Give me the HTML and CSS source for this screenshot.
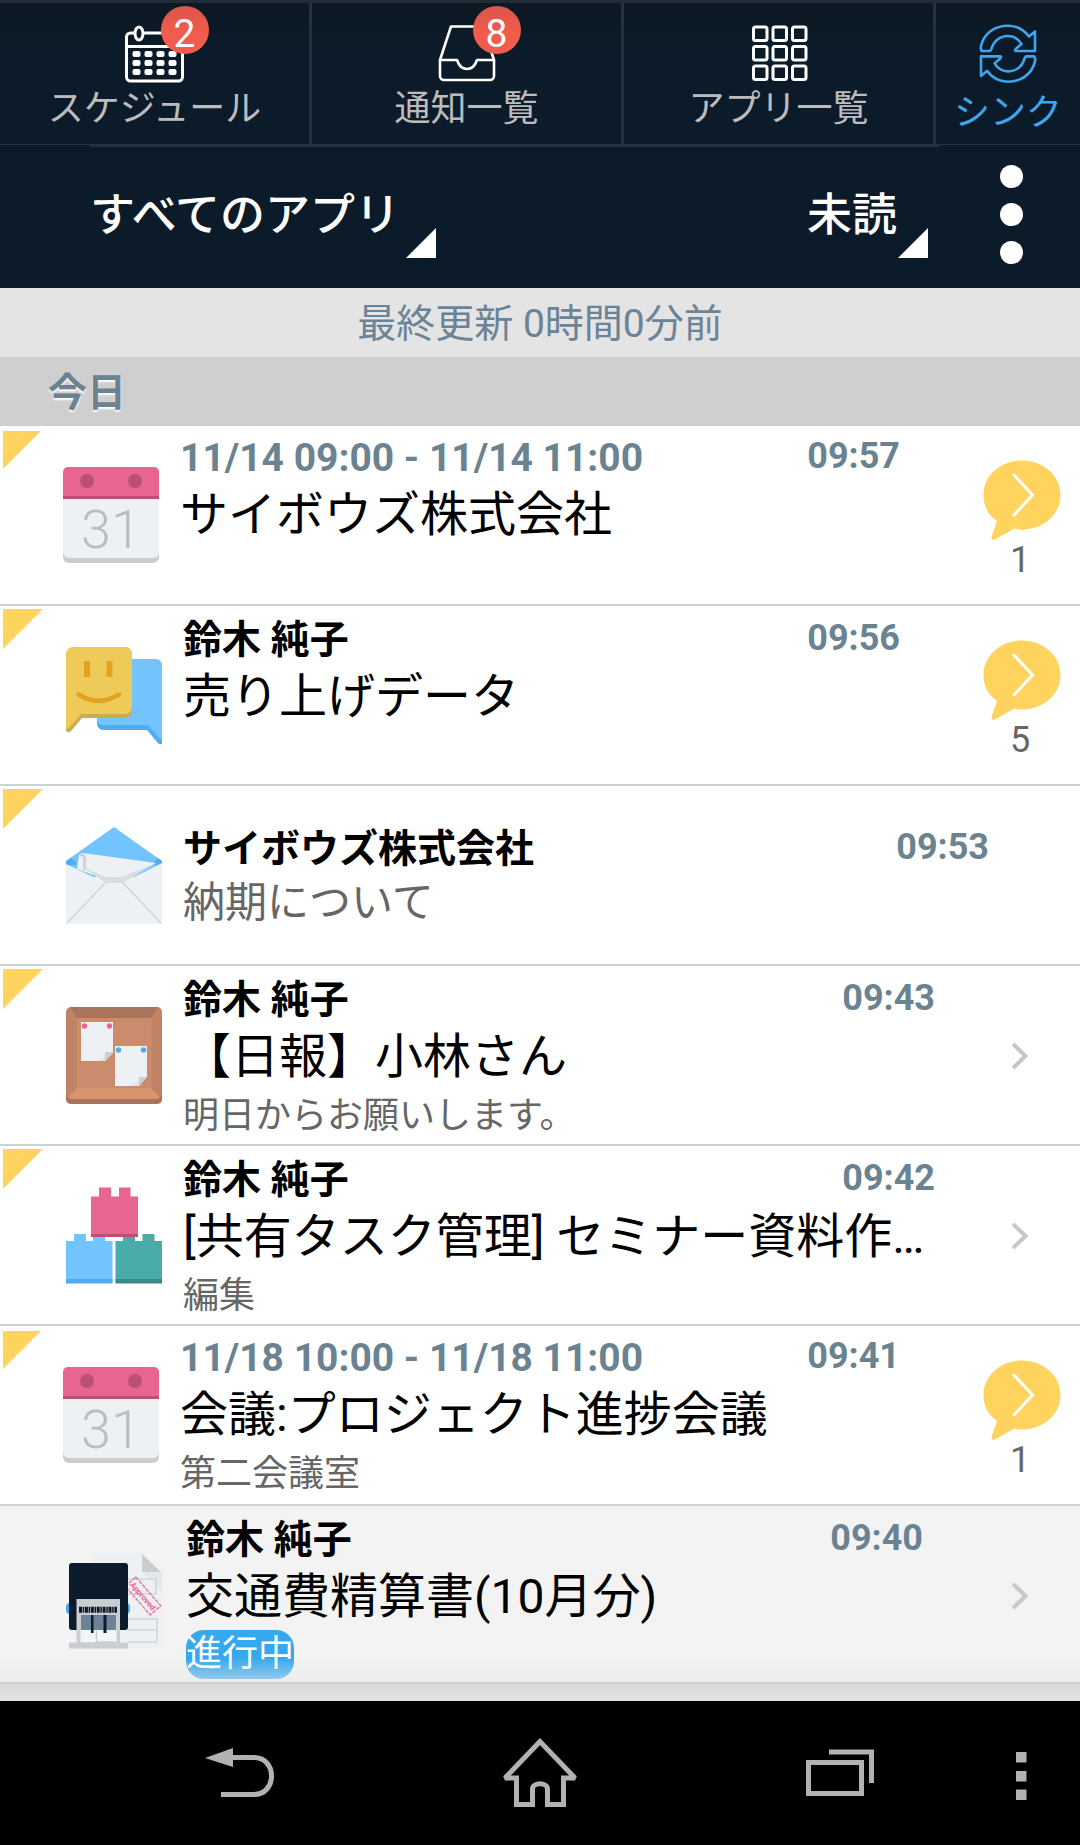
FILE: index.html
```
<!DOCTYPE html>
<html lang="ja">
<head>
    <meta charset="UTF-8">
    <meta name="viewport" content="width=device-width, initial-scale=1.0">
    <title>通知一覧</title>
    <link rel="stylesheet" href="styles.css">
</head>
<body>
    <nav class="tabs">
        <a class="tab" href="#schedule">
            <span class="tab-icon">
                <svg viewBox="0 0 60 60" fill="none" stroke="#fff" stroke-width="3">
                    <rect x="1.5" y="9" width="56" height="48" rx="4"/>
                    <path d="M1.5 22.5H57.5"/>
                    <ellipse cx="14" cy="9.5" rx="4" ry="6.5" fill="#0c1b29"/>
                    <g fill="#fff" stroke="none">
                        <rect x="7.5" y="27" width="8" height="6" rx="2"/><rect x="19.5" y="27" width="8" height="6" rx="2"/><rect x="31.5" y="27" width="8" height="6" rx="2"/><rect x="43.5" y="27" width="8" height="6" rx="2"/>
                        <rect x="7.5" y="36" width="8" height="6" rx="2"/><rect x="19.5" y="36" width="8" height="6" rx="2"/><rect x="31.5" y="36" width="8" height="6" rx="2"/><rect x="43.5" y="36" width="8" height="6" rx="2"/>
                        <rect x="7.5" y="45" width="8" height="6" rx="2"/><rect x="19.5" y="45" width="8" height="6" rx="2"/><rect x="31.5" y="45" width="8" height="6" rx="2"/><rect x="43.5" y="45" width="8" height="6" rx="2"/>
                    </g>
                </svg>
                <span class="badge">2</span>
            </span>
            <span class="tab-label">スケジュール</span>
        </a>
        <a class="tab" href="#notice">
            <span class="tab-icon">
                <svg viewBox="0 0 60 60" fill="none" stroke="#fff" stroke-width="2.6" stroke-linejoin="round">
                    <path d="M3 36L14 2.5H46L57 36V52a4 4 0 0 1-4 4H7a4 4 0 0 1-4-4Z"/>
                    <path d="M3 36H20C22 42 25 45 30 45S38 42 40 36H57"/>
                </svg>
                <span class="badge">8</span>
            </span>
            <span class="tab-label">通知一覧</span>
        </a>
        <a class="tab" href="#apps">
            <span class="tab-icon">
                <svg viewBox="0 0 60 60" fill="none" stroke="#fff" stroke-width="3">
                    <rect x="4.5" y="3" width="13.5" height="13.5" rx="2"/><rect x="24" y="3" width="13.5" height="13.5" rx="2"/><rect x="43.5" y="3" width="13.5" height="13.5" rx="2"/>
                    <rect x="4.5" y="22.5" width="13.5" height="13.5" rx="2"/><rect x="24" y="22.5" width="13.5" height="13.5" rx="2"/><rect x="43.5" y="22.5" width="13.5" height="13.5" rx="2"/>
                    <rect x="4.5" y="42" width="13.5" height="13.5" rx="2"/><rect x="24" y="42" width="13.5" height="13.5" rx="2"/><rect x="43.5" y="42" width="13.5" height="13.5" rx="2"/>
                </svg>
            </span>
            <span class="tab-label">アプリ一覧</span>
        </a>
        <button class="tab sync" type="button">
            <span class="tab-icon">
                <svg viewBox="0 0 60 60" fill="none" stroke="#40a5ec" stroke-width="2.6" stroke-linejoin="round">
                    <path id="sync-arrow" d="M4 27C2 26 3 24 3 22C6 9 17 1.7 30 1.7C38 1.7 46 6 51 12.5L57 7.5V27H37.5C36 26 38 24.5 43.5 20C40 14.5 35 12 30 12C22 12 15.500 17 13.500 25L12 27Z"/>
                    <use href="#sync-arrow" transform="rotate(180 30 29.7)"/>
                </svg>
            </span>
            <span class="tab-label">シンク</span>
        </button>
    </nav>

    <header class="filter">
        <div class="filter-row">
            <div class="picker">
                <select aria-label="アプリ"><option>すべてのアプリ</option></select>
            </div>
            <div class="picker picker-right">
                <select aria-label="表示"><option>未読</option></select>
            </div>
            <button class="more" type="button" aria-label="メニュー">
                <i></i><i></i><i></i>
            </button>
        </div>
    </header>

    <main>
        <p class="updated">最終更新 0時間0分前</p>
        <h2 class="day">今日</h2>

        <ul class="list">
            <li>
                <a class="item unread schedule" href="#1">
                    <svg class="icon" viewBox="0 0 96 102">
                        <rect y="40" width="96" height="56" rx="6" fill="#c9ced3"/>
                        <path d="M0 28H96V85a6 6 0 0 1-6 6H6a6 6 0 0 1-6-6Z" fill="#edf1f3"/>
                        <path d="M0 32V5a5 5 0 0 1 5-5H91a5 5 0 0 1 5 5V32Z" fill="#e86591"/>
                        <path d="M0 29H96V32H0Z" fill="#ba5175"/>
                        <circle cx="24" cy="14" r="7" fill="#ba5175"/><circle cx="72" cy="14" r="7" fill="#ba5175"/>
                        <text class="icon-day" x="48" y="81">31</text>
                    </svg>
                    <div class="body">
                        <div class="head"><span class="date">11/14 09:00 - 11/14 11:00</span><time>09:57</time></div>
                        <div class="title">サイボウズ株式会社</div>
                    </div>
                    <div class="action">
                        <svg class="bubble" viewBox="0 0 78 80">
                            <path d="M39-.5C61-.5 77.500 15 77.500 34S61 68.500 39 68.500Q35 68.500 31.500 67.500L11 79Q8 79 8.500 76L14 60C5 54 .5 45 .5 34C.5 15 17-.5 39-.5Z" fill="#ffd45e"/>
                            <path d="M31 14L49.500 34L31 54" fill="none" stroke="#fff" stroke-width="3" stroke-linecap="round" stroke-linejoin="round"/>
                        </svg>
                        <span class="count">1</span>
                    </div>
                </a>
            </li>
            <li>
                <a class="item unread talk" href="#2">
                    <svg class="icon" viewBox="0 0 96 102">
                        <path d="M37 13H90a6 6 0 0 1 6 6V97Q93 98 91 95L81 83H37a6 6 0 0 1-6-6V19Z" fill="#50acf0"/>
                        <path d="M37 12H90a6 6 0 0 1 6 6V92Q95 93 93 91L82 78H37a6 6 0 0 1-6-6V18Z" fill="#73c3ff"/>
                        <path d="M7 0H59a7 7 0 0 1 7 7V64a7 7 0 0 1-7 7H16L5 84Q1 87 0 83V7Z" fill="#cdac4c"/>
                        <path d="M7 0H59a7 7 0 0 1 7 7V60a7 7 0 0 1-7 7H15L3 81Q0 83 0 80V7a7 7 0 0 1 7-7Z" fill="#eecb59"/>
                        <path d="M18 14H24V30H18ZM40.500 14H46.500V30H40.500Z" fill="#e2a320"/>
                        <path d="M12.500 47.500Q32 60 53 47.500" fill="none" stroke="#e2a320" stroke-width="4.500" stroke-linecap="round"/>
                    </svg>
                    <div class="body">
                        <div class="head"><span class="name">鈴木 純子</span><time>09:56</time></div>
                        <div class="title">売り上げデータ</div>
                    </div>
                    <div class="action">
                        <svg class="bubble" viewBox="0 0 78 80">
                            <path d="M39-.5C61-.5 77.500 15 77.500 34S61 68.500 39 68.500Q35 68.500 31.500 67.500L11 79Q8 79 8.500 76L14 60C5 54 .5 45 .5 34C.5 15 17-.5 39-.5Z" fill="#ffd45e"/>
                            <path d="M31 14L49.500 34L31 54" fill="none" stroke="#fff" stroke-width="3" stroke-linecap="round" stroke-linejoin="round"/>
                        </svg>
                        <span class="count">5</span>
                    </div>
                </a>
            </li>
            <li>
                <a class="item unread mail" href="#3">
                    <svg class="icon" viewBox="0 0 96 102">
                        <path d="M0 34L48 0L96 34V50H0Z" fill="#73c3ff"/>
                        <path d="M0 34V38H10V35L5 31ZM96 34V38H88V35L92 31Z" fill="#50acf0"/>
                        <path d="M11 42L13 28Q14 26 17 26L90 36L60 52H38Z" fill="#edf1f3"/>
                        <path d="M0 37L39 55.500H57L96 36V97H0Z" fill="#edf1f3"/>
                        <path d="M14 28Q18 27 18.500 31V43" fill="none" stroke="#c9ced3" stroke-width="2.500"/>
                        <path d="M17 40L40 50H56L90 36L57 56H39Z" fill="#d9dde1"/>
                        <path d="M39 56L1 96M57 56L95 96" stroke="#d0d5d8" stroke-width="1.500"/>
                    </svg>
                    <div class="body">
                        <div class="head"><span class="name">サイボウズ株式会社</span><time>09:53</time></div>
                        <div class="subject">納期について</div>
                    </div>
                </a>
            </li>
            <li>
                <a class="item unread" href="#4">
                    <svg class="icon" viewBox="0 0 96 102">
                        <rect width="96" height="97" rx="5" fill="#c08465"/>
                        <path d="M4 0H92L85 11H11Z" fill="#a8745b"/>
                        <path d="M0 89L4 92H92L96 89V92a5 5 0 0 1-5 5H5a5 5 0 0 1-5-5Z" fill="#a8745b"/>
                        <path d="M11 81H85L94 90L91 92H5L2 90Z" fill="#d6946f"/>
                        <rect x="11" y="11" width="74.500" height="70" fill="#ca8c6c"/>
                        <path d="M15 15H47V46L39 54H15ZM49 39H81V70L73 79H49Z" fill="#edf1f3"/>
                        <path d="M47 45L30 54H39ZM81 69L64 79H73Z" fill="#e2e5e7"/>
                        <path d="M39 45H47L39 54ZM73 70H81L73 79Z" fill="#c9ced3"/>
                        <circle cx="18.500" cy="19" r="2.700" fill="#e86591"/><circle cx="43.500" cy="19" r="2.700" fill="#e86591"/>
                        <circle cx="52.500" cy="43" r="2.700" fill="#50acf0"/><circle cx="77.500" cy="43" r="2.700" fill="#50acf0"/>
                    </svg>
                    <div class="body">
                        <div class="head"><span class="name">鈴木 純子</span><time>09:43</time></div>
                        <div class="title">【日報】小林さん</div>
                        <div class="note">明日からお願いします。</div>
                    </div>
                    <div class="action">
                        <svg class="chevron" viewBox="0 0 18 28"><path d="M2 2L14.500 14L2 26" fill="none" stroke="#c7c7cc" stroke-width="4"/></svg>
                    </div>
                </a>
            </li>
            <li>
                <a class="item unread" href="#5">
                    <svg class="icon" viewBox="0 0 96 102">
                        <path d="M0 54H8V47H20V54H27V47H39V54H46.500V96H0Z" fill="#73c3ff"/>
                        <path d="M0 92H46.500V96.500H0Z" fill="#50acf0"/>
                        <path d="M49.500 54H57V47H69V54H76.500V47H88.500V54H96V96H49.500Z" fill="#4aaca8"/>
                        <path d="M49.500 92H96V96.500H49.500Z" fill="#3c8a87"/>
                        <path d="M25 9.500H33V.5H45V9.500H53V.5H64.500V9.500H72V50H25Z" fill="#e86591"/>
                        <path d="M25 47H72V50H25Z" fill="#ba5175"/>
                    </svg>
                    <div class="body">
                        <div class="head"><span class="name">鈴木 純子</span><time>09:42</time></div>
                        <div class="title">[共有タスク管理] セミナー資料作…</div>
                        <div class="note">編集</div>
                    </div>
                    <div class="action">
                        <svg class="chevron" viewBox="0 0 18 28"><path d="M2 2L14.500 14L2 26" fill="none" stroke="#c7c7cc" stroke-width="4"/></svg>
                    </div>
                </a>
            </li>
            <li>
                <a class="item unread schedule" href="#6">
                    <svg class="icon" viewBox="0 0 96 102">
                        <rect y="40" width="96" height="56" rx="6" fill="#c9ced3"/>
                        <path d="M0 28H96V85a6 6 0 0 1-6 6H6a6 6 0 0 1-6-6Z" fill="#edf1f3"/>
                        <path d="M0 32V5a5 5 0 0 1 5-5H91a5 5 0 0 1 5 5V32Z" fill="#e86591"/>
                        <path d="M0 29H96V32H0Z" fill="#ba5175"/>
                        <circle cx="24" cy="14" r="7" fill="#ba5175"/><circle cx="72" cy="14" r="7" fill="#ba5175"/>
                        <text class="icon-day" x="48" y="81">31</text>
                    </svg>
                    <div class="body">
                        <div class="head"><span class="date">11/18 10:00 - 11/18 11:00</span><time>09:41</time></div>
                        <div class="title">会議:プロジェクト進捗会議</div>
                        <div class="note">第二会議室</div>
                    </div>
                    <div class="action">
                        <svg class="bubble" viewBox="0 0 78 80">
                            <path d="M39-.5C61-.5 77.500 15 77.500 34S61 68.500 39 68.500Q35 68.500 31.500 67.500L11 79Q8 79 8.500 76L14 60C5 54 .5 45 .5 34C.5 15 17-.5 39-.5Z" fill="#ffd45e"/>
                            <path d="M31 14L49.500 34L31 54" fill="none" stroke="#fff" stroke-width="3" stroke-linecap="round" stroke-linejoin="round"/>
                        </svg>
                        <span class="count">1</span>
                    </div>
                </a>
            </li>
            <li>
                <a class="item workflow" href="#7">
                    <svg class="icon" viewBox="0 0 96 102">
                        <path d="M26 6H77L96 25V101H26Z" fill="#edf1f3"/>
                        <path d="M76 7L95 25H76Z" fill="#c9ced3"/>
                        <path d="M77 25H96V44Z" fill="#e4e8ea"/>
                        <path d="M62 32H90V47H62M62 72H91V95H62M62 83H91" fill="none" stroke="#d0d5d8" stroke-width="1.500"/>
                        <g transform="translate(77 49) rotate(49)">
                            <rect x="-19" y="-7" width="38" height="14" fill="none" stroke="#ee7ba0" stroke-width="1.500" stroke-dasharray="4 1"/>
                            <text class="icon-stamp" x="0" y="3">Approved</text>
                        </g>
                        <rect x="0" y="56" width="64" height="11" rx="4" fill="#45a9f0"/>
                        <rect x="3" y="16" width="59" height="67" rx="3" fill="#0c1b29"/>
                        <path d="M10.500 52H54V97H10.500Z" fill="#c9ced3"/>
                        <path d="M14.500 83H50.500V95.500H14.500Z" fill="#f4f5f6"/>
                        <path d="M15 68H50V83H15Z" fill="#6c8296"/>
                        <path d="M13 62.700H51" stroke="#0c1b29" stroke-width="6" stroke-dasharray="3 .7 1.500 .7"/>
                        <path d="M25 68H27.500V86H25ZM37.500 68H40.500V86H37.500Z" fill="#0c1b29"/>
                        <path d="M30.500 84V95M30.500 95H50" stroke="#c9ced3" stroke-width="1.500"/>
                        <path d="M3 95.500H62V101.500H3Z" fill="#c9ced3"/>
                    </svg>
                    <div class="body">
                        <div class="head"><span class="name">鈴木 純子</span><time>09:40</time></div>
                        <div class="title">交通費精算書(10月分)</div>
                        <span class="status">進行中</span>
                    </div>
                    <div class="action">
                        <svg class="chevron" viewBox="0 0 18 28"><path d="M2 2L14.500 14L2 26" fill="none" stroke="#c7c7cc" stroke-width="4"/></svg>
                    </div>
                </a>
            </li>
        </ul>
        <div class="list-end"></div>
    </main>

    <footer class="softkeys">
        <button type="button" aria-label="戻る">
            <svg width="70" height="50" viewBox="0 0 70 50">
                <path d="M0 10L28 0V19Z" fill="#b2b2b2"/>
                <path d="M27 9.500H49C60 9.500 66.500 18 66.500 28S60 46.500 49 46.500H16" fill="none" stroke="#b2b2b2" stroke-width="5"/>
            </svg>
        </button>
        <button type="button" aria-label="ホーム">
            <svg width="78" height="70" viewBox="0 0 78 70" fill="none" stroke="#b2b2b2" stroke-width="5">
                <path d="M39 3.500L4 40H15.500V66.500H31.500V51C31.500 44 46.500 44 46.500 51V66.500H62.500V40H74Z" stroke-linejoin="miter" stroke-miterlimit="1.500"/>
            </svg>
        </button>
        <button type="button" aria-label="最近使ったアプリ">
            <svg width="68" height="48" viewBox="0 0 68 48" fill="none" stroke="#b2b2b2" stroke-width="5">
                <rect x="2.500" y="13.500" width="53" height="31"/>
                <path d="M23 3H65.500V34"/>
            </svg>
        </button>
        <button class="softkey-menu" type="button" aria-label="オプション">
            <svg width="11" height="48" viewBox="0 0 11 48" fill="#b2b2b2">
                <path d="M0 0H10.500V10.500H0ZM0 19H10.500V29.500H0ZM0 37.500H10.500V48H0Z"/>
            </svg>
        </button>
    </footer>
</body>
</html>
```
FILE: styles.css
```
* { box-sizing: border-box; }
body {
    margin: 0;
    background: #000;
    color: #000;
    font-family: Roboto, "Noto Sans CJK JP", sans-serif;
}
a { color: inherit; text-decoration: none; }
button { 
    margin: 0;
    padding: 0;
    border: none;
    background: none;
    font-family: inherit;
    cursor: pointer;
}
svg { display: block; overflow: visible; }

/* top tabs */
.tabs {
    display: grid;
    grid-template-columns: 13fr 13fr 13fr 6fr;
    height: 144px;
    border-top: 3px solid #222c37;
    background: linear-gradient(#0c1822, #0c1b29 40px);
}
.tab {
    display: flex;
    flex-direction: column;
    align-items: center;
    justify-content: flex-start;
    gap: 3px;
    padding-top: 21px;
    border-right: 3px solid #24313e;
    color: #bcbcbc;
    font-size: 36px;
    line-height: 44px;
}
.tab-icon { position: relative; width: 60px; height: 60px; }
.sync { gap: 7px; border-right: none; color: #40a5ec; }
.badge {
    position: absolute;
    top: -18px;
    left: 36px;
    width: 48px;
    height: 48px;
    padding-top: 4px;
    border-radius: 50%;
    background: linear-gradient(#d9564a, #f25c4c 60%);
    color: #fff;
    font-size: 39px;
    line-height: 48px;
    text-align: center;
}

/* filter bar */
.filter { background: #0c1b29; box-shadow: inset 0 1px #24313e; }
.filter::before {
    content: "";
    display: block;
    height: 3px;
    margin: 0 141px 0 90px;
    background: #24313e;
}
.filter-row {
    display: flex;
    align-items: flex-end;
    height: 141px;
    padding: 0 57px 24px 90px;
}
.picker { display: flex; align-items: flex-end; padding-bottom: 6px; }
.picker-right { margin-left: auto; margin-right: 72px; }
.picker::after {
    content: "";
    width: 30px;
    height: 30px;
    background: #fff;
    clip-path: polygon(100% 0, 100% 100%, 0 100%);
}
.picker select {
    appearance: none;
    height: 60px;
    margin: 0 0 12px;
    padding: 0;
    border: none;
    background: none;
    color: #fff;
    font-family: inherit;
    font-size: 45px;
    line-height: 60px;
    font-weight: 500;
}
.more { display: flex; flex-direction: column; gap: 15px; }
.more i { width: 23px; height: 23px; border-radius: 50%; background: #fff; }

/* list headings */
.updated, .day { margin: 0; height: 69px; font-size: 39px; line-height: 72px; color: #6b8396; }
.updated { background: #e4e4e4; text-align: center; }
.day {
    padding-left: 48px;
    background: #cfcfcf;
    color: #6b8391;
    font-weight: bold;
    text-shadow: 0 2px 2px #fff;
}

/* notices */
.list { margin: 0; padding: 0; list-style: none; background: #fff; }
.item {
    position: relative;
    display: flex;
    align-items: flex-start;
    min-height: 180px;
    border-bottom: 2px solid #cdd3d3;
}
.unread::before {
    content: "";
    position: absolute;
    top: 3px;
    left: 3px;
    width: 40px;
    height: 40px;
    background: #ffd45e;
    clip-path: polygon(0 0, 100% 0, 0 100%);
}
.icon { flex: none; width: 96px; height: 102px; margin: 41px 21px 0 66px; }
.icon-day { fill: #b9bebf; font-size: 54px; font-weight: 300; text-anchor: middle; }
.icon-stamp { fill: #e86591; font-size: 8px; font-weight: bold; text-anchor: middle; }
.body { flex: 1; min-width: 0; padding: 10px 25px 0 0; white-space: nowrap; }
.head { display: flex; justify-content: space-between; align-items: flex-start; }
.name, .date { font-size: 39px; line-height: 48px; font-weight: bold; }
.date, .item time { color: #6b8391; }
.item time { font-size: 36px; line-height: 44px; font-weight: bold; }
.title { font-size: 48px; line-height: 66px; }
.subject { color: #666; font-size: 42px; line-height: 60px; }
.note { color: #666; font-size: 36px; line-height: 52px; }
.action {
    flex: none;
    display: flex;
    flex-direction: column;
    align-items: center;
    align-self: stretch;
    width: 120px;
    padding-top: 35px;
}
.bubble { width: 78px; height: 80px; margin-left: 4px; }
.count { color: #666; font-size: 36px; line-height: 38px; }
.chevron { width: 18px; height: 28px; margin-top: 41px; }

.schedule::before { top: 5px; width: 38px; height: 38px; }
.schedule .icon { margin-left: 63px; }
.schedule .body { padding: 8px 60px 0 0; }
.talk .body { padding-right: 60px; }
.mail .body { padding: 39px 91px 0 0; }

.workflow { min-height: 178px; background: #f3f3f3; }
.workflow .icon { margin-right: 24px; }
.workflow .body { padding-right: 37px; }
.workflow::after {
    content: "";
    position: absolute;
    inset: auto 0 0;
    height: 24px;
    background: linear-gradient(rgba(232, 232, 232, 0), rgba(232, 232, 232, .6));
}
.status {
    display: inline-block;
    border-radius: 18px;
    background: #36a8ee;
    color: #fff;
    font-size: 36px;
    line-height: 49px;
}
.list-end { height: 17px; background: linear-gradient(#d9d9d9, #e5e5e5); }

/* android keys */
.softkeys {
    display: grid;
    grid-template-columns: 10fr 10fr 10fr 3fr;
    height: 144px;
    padding-left: 90px;
    background: #000;
}
.softkeys button { display: flex; align-items: center; justify-content: center; }
.softkeys .softkey-menu { padding: 6px 28px 0 0; }
```
